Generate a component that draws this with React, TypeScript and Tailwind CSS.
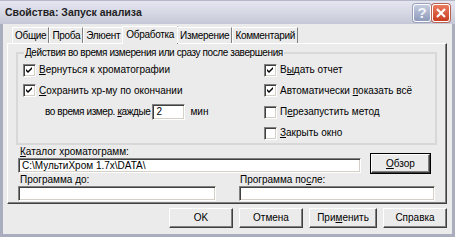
import React from 'react';

const sunken =
  'border border-t-[#808080] border-l-[#808080] border-b-white border-r-white shadow-[inset_1px_1px_0_#404040,inset_-1px_-1px_0_#d4d0c8]';

const raised =
  'border border-t-white border-l-white border-b-[#404040] border-r-[#404040] shadow-[inset_-1px_-1px_0_#808080]';

const Check = ({ checked }: { checked?: boolean }) => (
  <span className={`w-[13px] h-[13px] bg-white shrink-0 flex items-center justify-center ${sunken}`}>
    {checked && (
      <svg width="7" height="7" viewBox="0 0 7 7">
        <path d="M0 2 L2 4 L6 0 L6 2 L2 6 L0 4 Z" fill="#000" />
      </svg>
    )}
  </span>
);

const CheckRow = ({ checked, children, h }: { checked?: boolean; children: React.ReactNode; h: string }) => (
  <div className={`flex items-center gap-[2px] ${h}`}>
    <Check checked={checked} />
    <span className="ml-[1px]">{children}</span>
  </div>
);

const Button = ({ children, w, className = '' }: { children: React.ReactNode; w: string; className?: string }) => (
  <button className={`${w} h-[20px] bg-[#ebebeb] flex items-center justify-center ${raised} ${className}`}>
    <span>{children}</span>
  </button>
);

export default function App() {
  const tabs = ['Общие', 'Проба', 'Элюент', 'Обработка', 'Измерение', 'Комментарий'];

  return (
    <div className="w-[455px] h-[237px] flex flex-col bg-[#ebebeb] border-[3px] border-t-0 border-[#a9adbd] font-['Liberation_Sans',Arial,sans-serif] text-[10px] text-black leading-none select-none">
      {/* Title bar */}
      <div className="h-[24px] -mx-[3px] px-[5px] flex items-center bg-gradient-to-b from-[#e4e5ef] via-[#d6d8e4] to-[#c4c7d6] border-t border-[#b4b8c8]">
        <span className="font-bold text-[10.5px] text-[#222]">Свойства: Запуск анализа</span>
        <div className="ml-auto flex gap-[1px]">
          <div className="w-[18px] h-[18px] rounded-[3px] border border-white bg-gradient-to-b from-[#c6cde0] to-[#8e9abb] flex items-center justify-center text-[15px] font-bold text-[#f1f3f8] shadow-[0_0_0_1px_#9aa2ba]">
            ?
          </div>
          <div className="w-[18px] h-[18px] rounded-[3px] border border-white bg-gradient-to-b from-[#ea7b5e] to-[#c93b1c] flex items-center justify-center shadow-[0_0_0_1px_#b9624f]">
            <svg width="10" height="10" viewBox="0 0 10 10">
              <path d="M1 1 L9 9 M9 1 L1 9" stroke="#fff" strokeWidth="2.2" />
            </svg>
          </div>
        </div>
      </div>

      <div className="flex-1 flex flex-col pl-[4px] pr-[5px] pt-[2px]">
        {/* Tabs */}
        <div className="flex items-end pl-[5px] h-[18px] relative z-10 tracking-[-0.3px]">
          {tabs.map((t) => {
            const active = t === 'Обработка';
            return (
              <div
                key={t}
                className={`flex items-center border-t border-l border-t-white border-l-white border-r border-r-[#808080] ${
                  active ? 'h-[18px] bg-[#ebebeb] -mx-[1px] px-[3px] pb-[1px]' : 'h-[16px] mb-[1px] px-[2px]'
                }`}
              >
                {t}
              </div>
            );
          })}
        </div>

        {/* Tab panel */}
        <div className="h-[161px] -mt-[1px] border border-t-white border-l-white border-b-[#404040] border-r-[#404040] shadow-[inset_-1px_-1px_0_#808080] pl-[8px] pr-[9px] pt-[2px]">
          <fieldset className="border-2 border-groove border-[#d8d8d8] pl-[5px] pb-0">
            <legend className="ml-[1px] px-[1px] leading-[13px] tracking-[-0.4px]">
              Действия во время измерения или сразу после завершения
            </legend>
            <div className="flex pt-[1px]">
              <div className="w-[241px]">
                <CheckRow checked h="h-[20px]">
                  <u>В</u>ернуться к хроматографии
                </CheckRow>
                <CheckRow checked h="h-[21px]">
                  <u>С</u>охранить хр-му по окончании
                </CheckRow>
                <div className="h-[22px] flex items-center pl-[22px]">
                  <span className="tracking-[-0.4px]">
                    во время измер. <u>к</u>аждые
                  </span>
                  <div className={`ml-[2px] w-[33px] h-[16px] bg-white flex items-center pl-[3px] ${sunken}`}>2</div>
                  <span className="ml-[5px]">мин</span>
                </div>
              </div>
              <div>
                <CheckRow checked h="h-[20px]">
                  В<u>ы</u>дать отчет
                </CheckRow>
                <CheckRow checked h="h-[21px]">
                  Автоматически <u>п</u>оказать всё
                </CheckRow>
                <CheckRow h="h-[22px]">
                  П<u>е</u>резапустить метод
                </CheckRow>
                <CheckRow h="h-[20px]">
                  <u>З</u>акрыть окно
                </CheckRow>
              </div>
            </div>
          </fieldset>

          <div className="pl-[2px] mt-[1px]">
            <div className="flex items-end">
              <div>
                <div className="h-[12px] flex items-center pl-[2px]">
                  <span>
                    <u>К</u>аталог хроматограмм:
                  </span>
                </div>
                <div className={`w-[343px] h-[15px] bg-white flex items-center pl-[3px] ${sunken}`}>
                  C:\МультиХром 1.7x\DATA\
                </div>
              </div>
              <button
                className={`ml-[10px] w-[59px] h-[19px] bg-[#ebebeb] flex items-center justify-center outline outline-1 outline-black ${raised}`}
              >
                <span>
                  <u>О</u>бзор
                </span>
              </button>
            </div>

            <div className="flex gap-[23px] mt-[1px]">
              <div>
                <div className="h-[12px] flex items-center pl-[2px]">
                  <span>
                    Программа <u>д</u>о:
                  </span>
                </div>
                <div className={`w-[198px] h-[15px] bg-white ${sunken}`} />
              </div>
              <div>
                <div className="h-[12px] flex items-center pl-[1px]">
                  <span>
                    Программа по<u>с</u>ле:
                  </span>
                </div>
                <div className={`w-[196px] h-[15px] bg-white ${sunken}`} />
              </div>
            </div>
          </div>
        </div>

        {/* Dialog buttons */}
        <div className="flex justify-end gap-[6px] mt-[4px]">
          <Button w="w-[64px]">OK</Button>
          <Button w="w-[64px]">Отмена</Button>
          <Button w="w-[68px]">
            При<u>м</u>енить
          </Button>
          <Button w="w-[64px]">Справка</Button>
        </div>
      </div>
    </div>
  );
}
